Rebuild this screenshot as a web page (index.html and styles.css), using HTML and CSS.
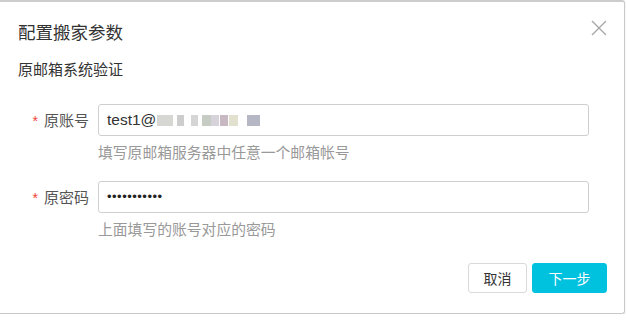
FILE: index.html
```html
<!DOCTYPE html>
<html lang="zh-CN">
<head>
<meta charset="utf-8">
<title>配置搬家参数</title>
<link rel="stylesheet" href="styles.css">
</head>
<body>
<div class="dialog">
  <div class="header">
    <div class="title">配置搬家参数</div>
    <button class="close" aria-label="关闭">
      <svg width="16" height="16" viewBox="0 0 16 16"><path d="M1 1 L15 15 M15 1 L1 15" stroke="#a8a8a8" stroke-width="1.4" fill="none"/></svg>
    </button>
  </div>
  <div class="subtitle">原邮箱系统验证</div>
  <div class="form">
    <div class="label req">原账号</div>
    <div class="field">
      <div class="input"><span>test1@</span><span class="blur"><i class="b1"></i><i class="b2"></i><i class="b3"></i><i class="b4"></i><i class="b5"></i><i class="b6"></i><i class="b7"></i><i class="b8"></i></span></div>
      <div class="hint">填写原邮箱服务器中任意一个邮箱帐号</div>
    </div>
    <div class="label req">原密码</div>
    <div class="field">
      <div class="input pwd">•••••••••••</div>
      <div class="hint">上面填写的账号对应的密码</div>
    </div>
  </div>
  <div class="footer">
    <button class="btn">取消</button>
    <button class="btn primary">下一步</button>
  </div>
</div>
</body>
</html>
```
FILE: styles.css
```css
html, body {
  margin: 0;
  padding: 0;
  background: #fff;
}
body {
  font-family: "Noto Sans CJK SC", "Liberation Sans", sans-serif;
  color: #333;
}
.dialog {
  box-sizing: border-box;
  width: 625px;
  height: 314px;
  border-top: 2px solid #cdcdcd;
  border-right: 1px solid #c9c9c9;
  border-bottom: 1px solid #c9c9c9;
  border-radius: 0 3px 3px 0;
  box-shadow: 0 1px 2px rgba(0,0,0,0.12);
  padding: 0 17px 0 18px;
}
.header {
  display: flex;
  justify-content: space-between;
  align-items: flex-start;
  padding-top: 18px;
}
.title {
  font-size: 17.5px;
  line-height: 24px;
  color: #333;
}
.close {
  border: 0;
  background: none;
  padding: 0;
  width: 16px;
  height: 16px;
  display: flex;
}
.subtitle {
  margin-top: 14px;
  font-size: 15px;
  line-height: 22px;
  color: #333;
}
.form {
  display: grid;
  grid-template-columns: 80px 491px;
  row-gap: 19px;
  margin-top: 24px;
}
.label {
  font-size: 15px;
  line-height: 32px;
  color: #555;
  text-align: right;
  padding-right: 9px;
}
.label.req::before {
  content: "*";
  color: #f04134;
  margin-right: 6px;
  font-size: 14px;
  font-family: "Liberation Sans", sans-serif;
}
.input {
  box-sizing: border-box;
  height: 32px;
  border: 1px solid #cfcfcf;
  border-radius: 3px;
  padding: 0 8px;
  font-family: "Liberation Sans", "Noto Sans CJK SC", sans-serif;
  font-size: 15.5px;
  line-height: 30px;
  color: #333;
  display: flex;
  align-items: center;
}
.input.pwd {
  font-size: 13px;
  letter-spacing: 0.5px;
  color: #222;
}
.blur {
  display: flex;
  align-items: center;
  height: 14px;
  margin-left: 1px;
}
.blur i {
  display: block;
  height: 11px;
  filter: blur(0.6px);
}
.b1 { width: 16px; background: #d6d6d2; }
.b2 { width: 7px; margin-left: 4px; background: #cdcdcd; }
.b3 { width: 7px; margin-left: 7px; background: #d5d5d5; }
.b4 { width: 9px; margin-left: 4px; background: #c6cbc4; }
.b5 { width: 8px; background: #d7d3da; }
.b6 { width: 8px; margin-left: 1px; background: #c8b8c1; }
.b7 { width: 9px; margin-left: 1px; background: #e2e0cf; }
.b8 { width: 13px; margin-left: 9px; background: #b6b7c4; }
.hint {
  margin-top: 6px;
  font-size: 14.8px;
  line-height: 20px;
  color: #999;
}
.footer {
  display: flex;
  justify-content: flex-end;
  gap: 5px;
  margin-top: 24px;
}
.btn {
  box-sizing: border-box;
  height: 30px;
  padding: 0;
  width: 59px;
  border: 1px solid #d9d9d9;
  border-radius: 3px;
  background: #fff;
  font-family: "Noto Sans CJK SC", sans-serif;
  font-size: 14px;
  color: #333;
}
.btn.primary {
  width: 75px;
  border-color: #00c1de;
  background: #00c1de;
  color: #fff;
}
```
